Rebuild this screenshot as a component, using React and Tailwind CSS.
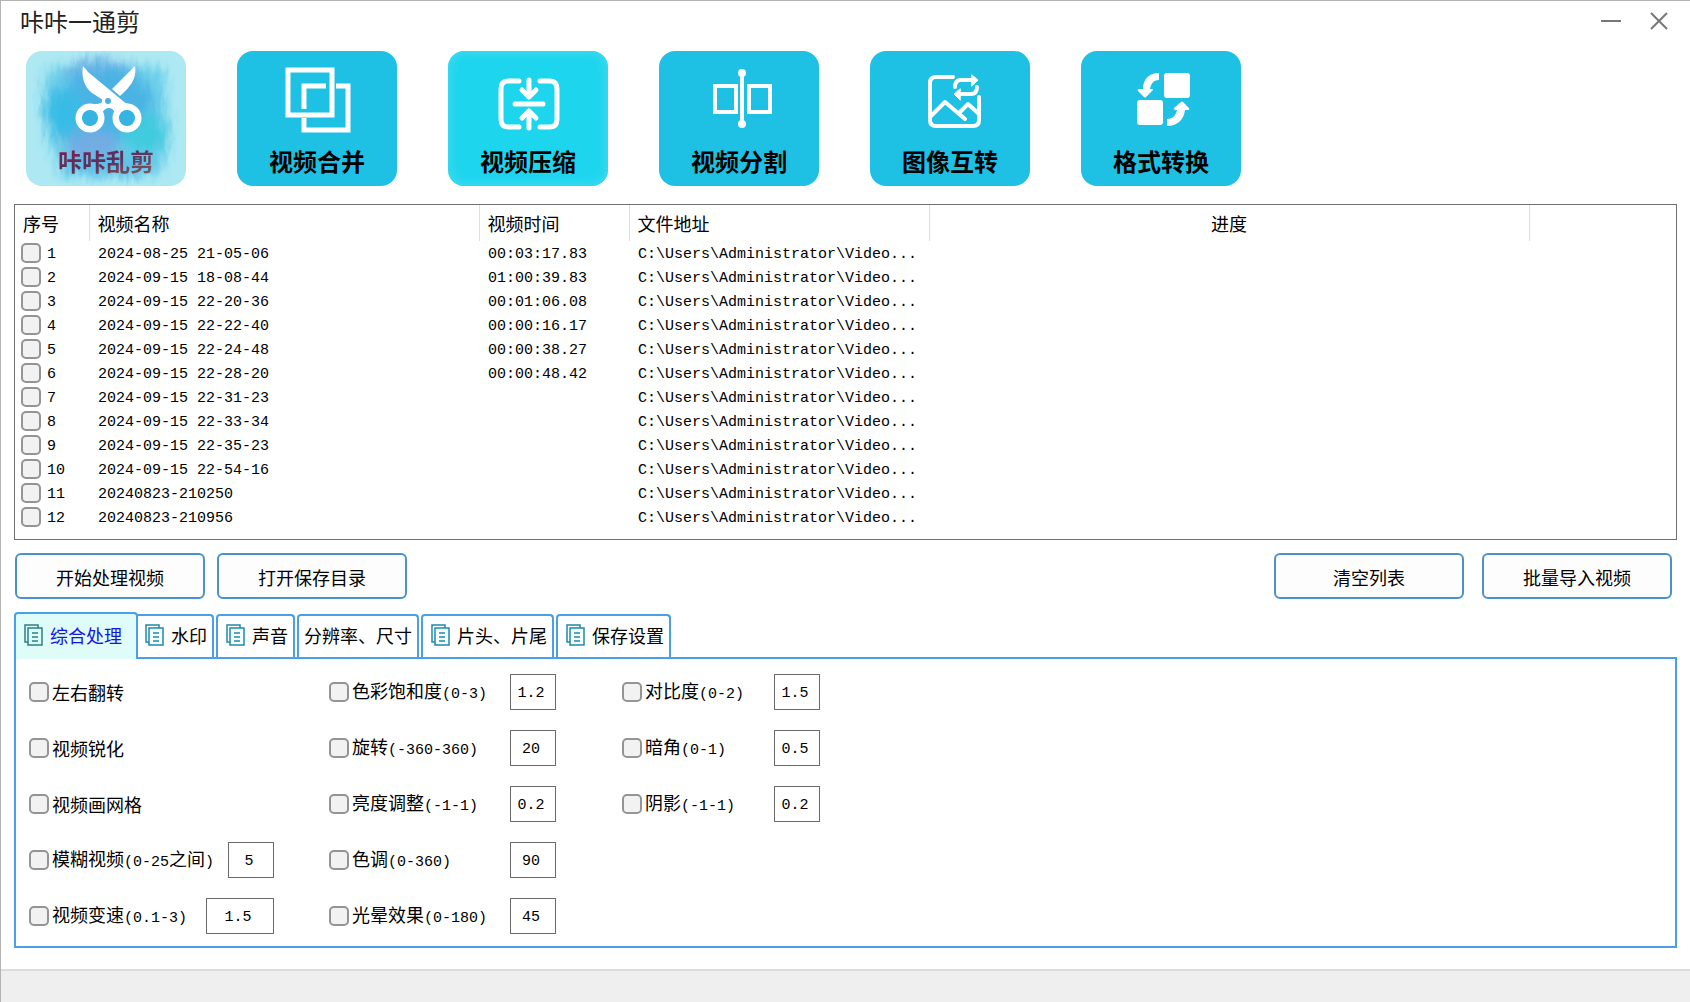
import { useState } from 'react';

const videos = [
  { id: 1, name: '2024-08-25 21-05-06', time: '00:03:17.83' },
  { id: 2, name: '2024-09-15 18-08-44', time: '01:00:39.83' },
  { id: 3, name: '2024-09-15 22-20-36', time: '00:01:06.08' },
  { id: 4, name: '2024-09-15 22-22-40', time: '00:00:16.17' },
  { id: 5, name: '2024-09-15 22-24-48', time: '00:00:38.27' },
  { id: 6, name: '2024-09-15 22-28-20', time: '00:00:48.42' },
  { id: 7, name: '2024-09-15 22-31-23', time: '' },
  { id: 8, name: '2024-09-15 22-33-34', time: '' },
  { id: 9, name: '2024-09-15 22-35-23', time: '' },
  { id: 10, name: '2024-09-15 22-54-16', time: '' },
  { id: 11, name: '20240823-210250', time: '' },
  { id: 12, name: '20240823-210956', time: '' },
];

const tabs = [
  { label: '综合处理', icon: true },
  { label: '水印', icon: true },
  { label: '声音', icon: true },
  { label: '分辨率、尺寸', icon: false },
  { label: '片头、片尾', icon: true },
  { label: '保存设置', icon: true },
];

// 每列的选项:label 为中文,range 为取值范围
const columns = [
  {
    className: 'w-[245px] mr-[55px]',
    options: [
      { id: 'flip', label: '左右翻转' },
      { id: 'sharpen', label: '视频锐化' },
      { id: 'grid', label: '视频画网格' },
      { id: 'blur', label: '模糊视频', range: '(0-25', tail: '之间', value: '5' },
      { id: 'speed', label: '视频变速', range: '(0.1-3)', value: '1.5', wide: true },
    ],
  },
  {
    className: 'w-[227px] mr-[66px]',
    options: [
      { id: 'saturation', label: '色彩饱和度', range: '(0-3)', value: '1.2' },
      { id: 'rotate', label: '旋转', range: '(-360-360)', value: '20' },
      { id: 'brightness', label: '亮度调整', range: '(-1-1)', value: '0.2' },
      { id: 'hue', label: '色调', range: '(0-360)', value: '90' },
      { id: 'halo', label: '光晕效果', range: '(0-180)', value: '45' },
    ],
  },
  {
    className: 'w-[198px]',
    options: [
      { id: 'contrast', label: '对比度', range: '(0-2)', value: '1.5' },
      { id: 'vignette', label: '暗角', range: '(0-1)', value: '0.5' },
      { id: 'shadow', label: '阴影', range: '(-1-1)', value: '0.2' },
    ],
  },
];

const ScissorsIcon = () => (
  <svg className="w-full h-full" viewBox="0 0 160 96" fill="none">
    <path
      fill="#fff"
      d="M57 15 C55 25 58 36 66 42 L77 49 Q76 53 70 53 L62 53 L76 62 Q79 57 83 57 Q87 57 89 62 L103 53 Q100 53 97 50 L62 21 Z"
    />
    <path fill="#fff" d="M109 15 C110 24 109 32 94 45 L86 38 Z" />
    <circle cx="64" cy="67" r="11" stroke="#fff" strokeWidth="7" />
    <circle cx="101" cy="67" r="11" stroke="#fff" strokeWidth="7" />
    <circle cx="64" cy="67" r="8" fill="#35b4e4" />
    <circle cx="101" cy="67" r="8" fill="#35b4e4" />
    <circle cx="82" cy="50" r="6" fill="#fff" />
    <circle cx="82" cy="50" r="3" fill="#4bb1e4" />
  </svg>
);

const MergeIcon = () => (
  <svg className="w-full h-full" viewBox="0 0 160 96" fill="none" stroke="#fff" strokeWidth="5">
    <rect x="51" y="19" width="44" height="45" />
    <path d="M89 35 H67 V58 M67 67 V79 H111 V35 H99" />
  </svg>
);

const CompressIcon = () => (
  <svg
    className="w-full h-full"
    viewBox="0 0 160 96"
    fill="none"
    stroke="#fff"
    strokeWidth="5"
    strokeLinecap="round"
    strokeLinejoin="round"
  >
    <path d="M71 30 H60 Q53 30 53 38 V68 Q53 76 60 76 H71 M92 30 H102 Q109 30 109 38 V68 Q109 76 102 76 H92" />
    <path d="M67 53 H95 M81 29 V44 M74 39 L81 46 L88 39 M81 77 V62 M74 67 L81 60 L88 67" />
  </svg>
);

const SplitIcon = () => (
  <svg className="w-full h-full" viewBox="0 0 160 96" fill="none" stroke="#fff" strokeWidth="4">
    <rect x="56" y="35" width="21" height="26" />
    <rect x="90" y="35" width="21" height="26" />
    <path d="M83 22 V74" />
    <circle cx="83" cy="22" r="4" fill="#fff" stroke="none" />
    <circle cx="83" cy="73" r="4" fill="#fff" stroke="none" />
  </svg>
);

const ImageIcon = () => (
  <svg
    className="w-full h-full"
    viewBox="0 0 160 96"
    fill="none"
    stroke="#fff"
    strokeWidth="4"
    strokeLinecap="round"
    strokeLinejoin="round"
  >
    <path d="M83 26 H66 Q60 26 60 32 V69 Q60 75 66 75 H103 Q109 75 109 69 V46" />
    <path d="M60 66 L75 51 L95 68 M89 62 L98 53 L109 63" />
    <path d="M85 36 Q85 29 91 29 H104 M107 36 Q107 43 101 43 H88" />
    <path fill="#fff" strokeWidth="1" d="M102 24 L108 29 L102 35 Z M90 38 L84 43 L90 49 Z" />
  </svg>
);

const FormatIcon = () => (
  <svg className="w-full h-full" viewBox="0 0 160 96" fill="#fff">
    <rect x="83" y="22" width="26" height="25" rx="3" />
    <rect x="56" y="49" width="26" height="25" rx="3" />
    <path d="M78 22 V29 C72 29 70 33 69 38 H71 Q73 38 71 40 L65 46 Q64 47 63 46 L57 40 Q56 38 58 38 H62 C62 29 67 22 78 22 Z" />
    <path d="M86 75 V68 C92 68 95 64 96 59 H94 Q92 58 93 57 L100 51 Q101 50 102 51 L108 57 Q109 59 107 59 H104 C103 68 97 75 86 75 Z" />
  </svg>
);

// 第一个卡片的水彩底纹
const BrushBackground = () => (
  <svg className="absolute inset-0 w-full h-full" viewBox="0 0 160 135" preserveAspectRatio="none">
    <defs>
      <filter id="brush" x="-20%" y="-20%" width="140%" height="140%">
        <feGaussianBlur stdDeviation="6" result="soft" />
        <feTurbulence type="fractalNoise" baseFrequency="0.2 0.06" numOctaves="4" seed="9" />
        <feDisplacementMap in="soft" scale="12" xChannelSelector="R" yChannelSelector="G" />
      </filter>
    </defs>
    <g filter="url(#brush)">
      <path d="M18 20 L65 8 L138 18 L144 95 L132 126 L36 126 L16 70 Z" fill="#6ccfe9" />
      <ellipse cx="74" cy="22" rx="34" ry="14" fill="#6fb4e6" />
      <ellipse cx="80" cy="54" rx="48" ry="38" fill="#4cb3e4" />
      <ellipse cx="38" cy="62" rx="18" ry="26" fill="#38bce6" />
      <ellipse cx="66" cy="94" rx="28" ry="15" fill="#72ace3" />
      <ellipse cx="118" cy="82" rx="22" ry="20" fill="#3fcbdf" />
      <ellipse cx="84" cy="114" rx="44" ry="11" fill="#5dbfe8" />
    </g>
  </svg>
);

const tools = [
  {
    label: '咔咔乱剪',
    Icon: ScissorsIcon,
    brush: true,
    card: 'bg-[#aee9f3]',
    text: 'bg-gradient-to-br from-[#8a0f48] via-[#5a2f5c] to-[#8a5a5c] bg-clip-text text-transparent',
  },
  { label: '视频合并', Icon: MergeIcon, card: 'bg-[#1ec1e4]', text: 'text-black' },
  {
    label: '视频压缩',
    Icon: CompressIcon,
    card: 'bg-[#1ed5ee] shadow-[inset_0_0_12px_#4bdcf0]',
    text: 'text-black',
  },
  { label: '视频分割', Icon: SplitIcon, card: 'bg-[#1ec1e4]', text: 'text-black' },
  { label: '图像互转', Icon: ImageIcon, card: 'bg-[#1ec1e4]', text: 'text-black' },
  { label: '格式转换', Icon: FormatIcon, card: 'bg-[#1ec1e4]', text: 'text-black' },
];

const CopyIcon = ({ active }) => (
  <svg
    className={`w-5 h-[22px] shrink-0 ${active ? 'text-[#2f7f86]' : 'text-[#2189ad]'}`}
    viewBox="0 0 20 22"
    fill="none"
    stroke="currentColor"
    strokeWidth="1.5"
  >
    <path d="M4 18 H1 V1 H14 V4" />
    <rect x="4" y="4" width="14" height="17" fill={active ? '#dcfcf8' : '#f4fdff'} />
    <path d="M8 9 H14 M8 13 H14 M8 17 H14" />
  </svg>
);

const Checkbox = props => (
  <input
    type="checkbox"
    className="appearance-none w-5 h-5 shrink-0 rounded-[5px] border-2 border-[#949494] bg-[#f2f2f2] checked:bg-[#1ec1e4]"
    {...props}
  />
);

const Latin = ({ children }) => (
  <span className="text-[15px] font-['Liberation_Mono',monospace]">{children}</span>
);

const ActionButton = ({ children }) => (
  <button
    type="button"
    className="w-[190px] h-[46px] pt-[2px] rounded-md border-2 border-[#4a92cc] bg-[#fdfdfd] hover:bg-[#e8f6fd]"
  >
    {children}
  </button>
);

const Option = ({ option }) => (
  <div className="flex items-center h-9">
    <Checkbox id={option.id} />
    <label htmlFor={option.id} className="ml-[3px] whitespace-nowrap">
      {option.label}
      {option.range && <Latin>{option.range}</Latin>}
      {option.tail && (
        <>
          {option.tail}
          <Latin>)</Latin>
        </>
      )}
    </label>
    {option.value && (
      <input
        type="text"
        aria-label={option.label}
        defaultValue={option.value}
        className={`ml-auto h-9 pt-[2px] pr-1 border border-[#6a6a6a] bg-white text-center text-[15px] font-['Liberation_Mono',monospace] ${
          option.wide ? 'w-[68px]' : 'w-[46px]'
        }`}
      />
    )}
  </div>
);

const App = () => {
  const [activeTab, setActiveTab] = useState(0);

  return (
    <div className="min-h-screen flex flex-col bg-white border-t border-l border-[#b4b4b4] text-black text-[18px] leading-6 font-['Noto_Sans_CJK_SC',sans-serif]">
      {/* 标题栏 */}
      <header className="flex items-center justify-between h-[50px] pl-[19px] pr-[21px] pb-[10px]">
        <h1 className="text-2xl text-[#222]">咔咔一通剪</h1>
        <div className="flex items-center gap-7 text-[#777]">
          <button type="button" aria-label="最小化">
            <svg className="w-5 h-5" viewBox="0 0 20 20" stroke="currentColor" strokeWidth="2">
              <path d="M0 10 H20" />
            </svg>
          </button>
          <button type="button" aria-label="关闭">
            <svg className="w-5 h-5" viewBox="0 0 20 20" stroke="currentColor" strokeWidth="2">
              <path d="M2 2 L18 18 M18 2 L2 18" />
            </svg>
          </button>
        </div>
      </header>

      {/* 功能入口 */}
      <nav className="flex gap-[51px] px-[25px]">
        {tools.map(({ label, Icon, brush, card, text }) => (
          <button
            key={label}
            type="button"
            className={`relative flex flex-col w-40 h-[135px] rounded-2xl overflow-hidden ${card}`}
          >
            {brush && <BrushBackground />}
            <span className="relative block w-full h-24">
              <Icon />
            </span>
            <span className={`relative self-center text-2xl leading-7 font-bold ${text}`}>{label}</span>
          </button>
        ))}
      </nav>

      <main className="flex-1 px-[13px] pt-[18px]">
        {/* 视频列表 */}
        <div className="h-[336px] border border-[#707070] overflow-auto">
          <table className="w-full table-fixed border-collapse text-left">
            <colgroup>
              <col className="w-[74px]" />
              <col className="w-[390px]" />
              <col className="w-[150px]" />
              <col className="w-[300px]" />
              <col className="w-[600px]" />
              <col />
            </colgroup>
            <thead>
              <tr className="h-9">
                <th className="pl-2 font-normal border-r border-[#dedede]">序号</th>
                <th className="pl-2 font-normal border-r border-[#dedede]">视频名称</th>
                <th className="pl-2 font-normal border-r border-[#dedede]">视频时间</th>
                <th className="pl-2 font-normal border-r border-[#dedede]">文件地址</th>
                <th className="font-normal border-r border-[#dedede] text-center">进度</th>
                <th></th>
              </tr>
            </thead>
            <tbody className="text-[15px] leading-5 font-['Liberation_Mono',monospace]">
              {videos.map(video => (
                <tr key={video.id} className="h-6">
                  <td className="p-0 pl-[6px]">
                    <label className="flex items-center gap-[6px]">
                      <Checkbox />
                      <span className="pt-1">{video.id}</span>
                    </label>
                  </td>
                  <td className="p-0 pt-1 pl-[9px]">{video.name}</td>
                  <td className="p-0 pt-1 pl-[9px]">{video.time}</td>
                  <td className="p-0 pt-1 pl-[9px]">C:\Users\Administrator\Video...</td>
                  <td className="p-0"></td>
                  <td className="p-0"></td>
                </tr>
              ))}
            </tbody>
          </table>
        </div>

        {/* 操作按钮 */}
        <div className="flex justify-between mt-[13px] pl-px pr-[5px]">
          <div className="flex gap-3">
            <ActionButton>开始处理视频</ActionButton>
            <ActionButton>打开保存目录</ActionButton>
          </div>
          <div className="flex gap-[18px]">
            <ActionButton>清空列表</ActionButton>
            <ActionButton>批量导入视频</ActionButton>
          </div>
        </div>

        {/* 选项卡 */}
        <div role="tablist" className="flex items-end gap-[2px] mt-3 h-[46px]">
          {tabs.map((tab, index) => (
            <button
              key={tab.label}
              type="button"
              role="tab"
              aria-selected={activeTab === index}
              onClick={() => setActiveTab(index)}
              className={`flex items-center gap-[6px] pb-[3px] rounded-t border-2 border-b-0 border-[#4a9fe8] ${
                activeTab === index
                  ? 'relative z-10 h-[47px] pl-2 pr-[14px] -mr-[5px] -mb-[2px] bg-[#dffcf9] text-[#1414e6]'
                  : tab.icon
                  ? 'h-[43px] pl-2 pr-[5px] bg-white'
                  : 'h-[43px] px-[5px] bg-white'
              }`}
            >
              {tab.icon && <CopyIcon active={activeTab === index} />}
              {tab.label}
            </button>
          ))}
        </div>
        <div role="tabpanel" className="flex border-2 border-[#4a9fe8] pl-[13px] pt-[15px] pb-3">
          {columns.map((column, index) => (
            <div key={index} className={`flex flex-col gap-5 ${column.className}`}>
              {column.options.map(option => (
                <Option key={option.id} option={option} />
              ))}
            </div>
          ))}
        </div>
      </main>

      {/* 状态栏 */}
      <footer className="h-[33px] border-t-2 border-[#dcdcdc] bg-[#efefef]"></footer>
    </div>
  );
};

export default App;
